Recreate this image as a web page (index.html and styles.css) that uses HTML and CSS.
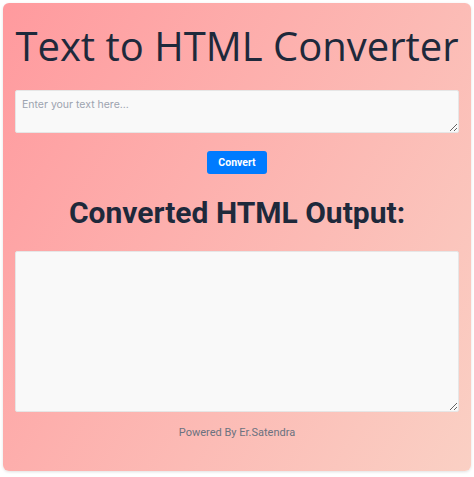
FILE: index.html
```html
<!DOCTYPE html>
<html>
<head>
<meta charset="utf-8">
<link rel="stylesheet" href="styles.css">
</head>
<body>
<div class="card">
  <h1 class="title">Text to HTML Converter</h1>
  <textarea class="input" placeholder="Enter your text here..."></textarea>
  <button class="btn">Convert</button>
  <h2 class="subtitle">Converted HTML Output:</h2>
  <textarea class="output"></textarea>
  <p class="footer">Powered By Er.Satendra</p>
</div>
</body>
</html>
```
FILE: styles.css
```css
html, body { margin: 0; padding: 0; background: #fff; }
body { padding: 3px; font-family: Roboto, "Liberation Sans", sans-serif; }
.card {
  width: 468px;
  height: 468px;
  box-sizing: border-box;
  padding: 0 12px;
  border-radius: 6px;
  background: linear-gradient(120deg, #ff9a9e 0%, #fad0c4 100%);
  box-shadow: 0 1px 3px rgba(0,0,0,0.12);
  display: flex;
  flex-direction: column;
  align-items: center;
}
.title {
  margin: 19px 0 0;
  font-family: "Open Sans", sans-serif;
  font-weight: 400;
  font-size: 40px;
  line-height: 48px;
  color: #1e293b;
  letter-spacing: 0;
}
.input, .output {
  width: 100%;
  box-sizing: border-box;
  background: #f9f9f9;
  border: 1px solid #e6e6e6;
  border-radius: 2px;
  font-family: Inter, sans-serif;
  font-size: 10.5px;
  padding: 7px 6px;
  resize: vertical;
}
.input { margin-top: 20px; height: 43px; }
.input::placeholder { color: #9ca3af; }
.btn {
  margin-top: 18px;
  width: 60px;
  height: 23px;
  border: 0;
  border-radius: 3px;
  background: #007bff;
  color: #fff;
  font-family: Roboto, sans-serif;
  font-weight: 700;
  font-size: 10.5px;
  padding: 0;
}
.subtitle {
  margin: 21px 0 0;
  font-family: Roboto, sans-serif;
  font-weight: 700;
  font-size: 30px;
  line-height: 36px;
  color: #1e293b;
}
.output { margin-top: 20px; height: 161px; }
.footer {
  margin: 14px 0 0;
  font-size: 11px;
  color: #6b7280;
}
```
